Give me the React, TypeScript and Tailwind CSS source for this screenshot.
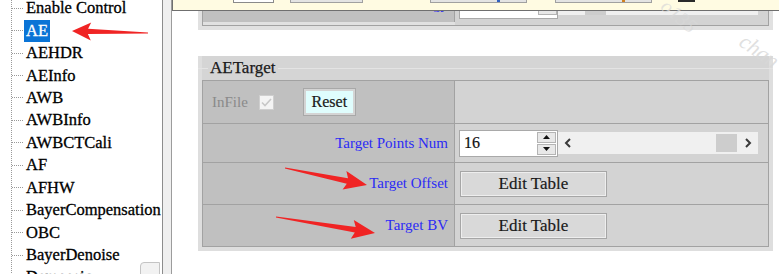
import React from 'react';

const TREE_ITEMS = [
  'Enable Control',
  'AE',
  'AEHDR',
  'AEInfo',
  'AWB',
  'AWBInfo',
  'AWBCTCali',
  'AF',
  'AFHW',
  'BayerCompensation',
  'OBC',
  'BayerDenoise',
  'Demosaic',
];

type Pt = [number, number];

// tapered red annotation arrow, built from tail / tip
const arrowPoints = (tail: Pt, tip: Pt, headLen: number, headHalf: number, tailHalf: number, neckHalf: number) => {
  const dx = tip[0] - tail[0];
  const dy = tip[1] - tail[1];
  const len = Math.hypot(dx, dy);
  const ux = dx / len;
  const uy = dy / len;
  const nx = -uy;
  const ny = ux;
  const base: Pt = [tip[0] - ux * headLen, tip[1] - uy * headLen];
  const pts: Pt[] = [
    [tail[0] + nx * tailHalf, tail[1] + ny * tailHalf],
    [base[0] + nx * neckHalf, base[1] + ny * neckHalf],
    [base[0] + nx * headHalf - ux * 3, base[1] + ny * headHalf - uy * 3],
    tip,
    [base[0] - nx * headHalf - ux * 3, base[1] - ny * headHalf - uy * 3],
    [base[0] - nx * neckHalf, base[1] - ny * neckHalf],
    [tail[0] - nx * tailHalf, tail[1] - ny * tailHalf],
  ];
  return pts.map(p => `${p[0].toFixed(1)},${p[1].toFixed(1)}`).join(' ');
};

const Arrows: React.FC = () => (
  <svg className="absolute inset-0 pointer-events-none" width={779} height={274} viewBox="0 0 779 274">
    <polygon points={arrowPoints([148, 33], [72, 31], 16, 9, 0.6, 2.6)} fill="#f02424" />
    <polygon points={arrowPoints([285, 168], [367, 185], 20, 9.5, 0.6, 2.8)} fill="#f02424" />
    <polygon points={arrowPoints([276, 217], [375, 233], 20, 9.5, 0.6, 2.8)} fill="#f02424" />
  </svg>
);

const Sidebar: React.FC = () => (
  <div className="relative w-[163px] shrink-0 h-full bg-white border-r border-[#8c8c8c] overflow-hidden">
    <div className="ml-[11px] -mt-[3px] border-l border-dotted border-[#9a9a9a]">
      {TREE_ITEMS.map(item => {
        const selected = item === 'AE';
        return (
          <div key={item} className="flex items-center h-[22.45px]">
            <div className="w-[11px] border-t border-dotted border-[#9a9a9a]" />
            <span
              className={
                selected
                  ? 'ml-[1px] px-[2px] leading-[22px] bg-[#0a74d6] text-white text-[16.5px] whitespace-nowrap [-webkit-text-stroke:0.3px_white]'
                  : 'ml-[3px] text-[16.5px] leading-[22px] text-black whitespace-nowrap [-webkit-text-stroke:0.3px_black]'
              }
            >
              {item}
            </span>
          </div>
        );
      })}
    </div>
    {/* scroll grip */}
    <div className="absolute left-[140px] top-[262px] w-[20px] h-[16px] bg-[#f2f2f2] border border-[#c4c4c4] rounded-tl-[4px]" />
  </div>
);

const Splitter: React.FC = () => (
  <div className="w-[9px] shrink-0 h-full bg-[#efefef] border-r border-[#9c9c9c]" />
);

const EditTableButton: React.FC = () => (
  <button className="w-[147px] h-[26px] bg-[#d9d9d9] border border-[#a6a6a6] shadow-[inset_1px_1px_0_#eeeeee,inset_-1px_-1px_0_#eeeeee] text-[17px] leading-none text-[#1a1a1a] flex items-center justify-center [-webkit-text-stroke:0.2px_#1a1a1a]">
    Edit Table
  </button>
);

const Chevron: React.FC<{ dir: 'left' | 'right' }> = ({ dir }) => (
  <svg width="10" height="12" viewBox="0 0 10 12">
    <path
      d={dir === 'left' ? 'M7 2 L3 6 L7 10' : 'M3 2 L7 6 L3 10'}
      fill="none"
      stroke="#3a3a3a"
      strokeWidth="2"
    />
  </svg>
);

const SpinInput: React.FC<{ value: string }> = ({ value }) => (
  <div className="w-[99px] h-[27px] bg-white border border-[#a9a9a9] flex items-stretch">
    <span className="flex-1 pl-[4px] pt-[3px] text-[16px] leading-[18px] text-[#111] [-webkit-text-stroke:0.2px_#111]">{value}</span>
    <div className="w-[19px] my-[1px] mr-[1px] flex flex-col gap-[1px]">
      <div className="flex-1 bg-[#e8e8e8] border border-[#b4b4b4] flex items-center justify-center">
        <svg width="7" height="4" viewBox="0 0 7 4"><path d="M0 4 L3.5 0 L7 4 Z" fill="#111" /></svg>
      </div>
      <div className="flex-1 bg-[#e8e8e8] border border-[#b4b4b4] flex items-center justify-center">
        <svg width="7" height="4" viewBox="0 0 7 4"><path d="M0 0 L3.5 4 L7 0 Z" fill="#111" /></svg>
      </div>
    </div>
  </div>
);

const HScroll: React.FC = () => (
  <div className="w-[200px] h-[22px] bg-[#f0f0f0] flex items-center">
    <div className="w-[20px] flex justify-center"><Chevron dir="left" /></div>
    <div className="flex-1 flex justify-end pr-[1px]">
      <div className="w-[21px] h-[18px] bg-[#cdcdcd]" />
    </div>
    <div className="w-[20px] flex justify-center"><Chevron dir="right" /></div>
  </div>
);

const PreviousPanel: React.FC = () => (
  <div className="h-[30px] shrink-0 bg-[#e1e1e1] px-[4px] pb-[4px]">
    <div className="h-[26px] grid grid-cols-[252px_1fr] border-x border-b border-[#a2a2a2]">
      <div className="h-[25px] bg-[#c0c0c0] border-r border-[#a2a2a2] flex justify-end items-start pr-[6px] -mt-[3px]">
        <span className="text-[15px] leading-[15px] text-[#2b2bf5]">Luma Strategy</span>
      </div>
      <div className="bg-[#d3d3d3] flex items-start pl-[4px]">
        <div className="w-[99px] h-[19px] bg-white border-x border-b border-[#a9a9a9] flex justify-end">
          <div className="w-[19px] h-[15px] bg-[#e8e8e8] border-x border-b border-[#b4b4b4]" />
        </div>
        <div className="w-[200px] h-[15px] bg-[#f0f0f0] flex items-end pl-[27px]">
          <div className="w-[21px] h-[5px] bg-[#cdcdcd]" />
        </div>
      </div>
    </div>
  </div>
);

const TopStrip: React.FC = () => (
  <div className="absolute top-0 left-[172px] right-0 h-[11px] bg-[#fffbe2] border-l border-b border-[#6f6f6f] flex items-start">
    <div className="ml-[60px] w-[41px] h-[3px] bg-white border-x border-b border-[#8a8a8a]" />
    <div className="ml-[16px] w-[73px] h-[3px] bg-[#e3e3e3] border-x border-b border-[#a0a0a0]" />
    <div className="ml-[67px] w-[97px] h-[3px] bg-[#e3e3e3] border-x border-b border-[#a0a0a0] flex justify-end pr-[26px]">
      <div className="w-[3px] h-[2px] bg-[#3060c0]" />
    </div>
    <div className="ml-[28px] w-[97px] h-[3px] bg-[#e3e3e3] border-x border-b border-[#a0a0a0] flex justify-end pr-[26px]">
      <div className="w-[3px] h-[2px] bg-[#d08020]" />
    </div>
    <div className="ml-[26px] w-[17px] h-[2px] bg-[#2a2a2a]" />
  </div>
);

const AETargetPanel: React.FC = () => (
  <div className="mt-[26px] shrink-0 bg-[#d5d5d5] px-[4px] pb-[4px] shadow-[inset_4px_0_0_#dedede,inset_-4px_0_0_#dedede,inset_0_-4px_0_#dedede]">
    {/* legend */}
    <div className="h-[24px] flex items-center -mx-[4px]">
      <div className="w-[10px] h-px bg-[#e4e4e4]" />
      <span className="px-[2px] text-[17px] leading-[20px] text-[#1a1a1a] [-webkit-text-stroke:0.25px_#1a1a1a]">AETarget</span>
      <div className="flex-1 h-px bg-[#e4e4e4]" />
    </div>
    <div className="grid grid-cols-[252px_1fr] border border-[#a2a2a2]">
      {/* row 1 */}
      <div className="h-[43px] bg-[#c0c0c0] border-r border-b border-[#a2a2a2] flex items-center pl-[9px]">
        <span className="text-[15px] text-[#8a8a8a]">InFile</span>
        <span className="ml-[11px] w-[15px] h-[15px] bg-[#f4f4f4] border border-[#cfcfcf] flex items-center justify-center">
          <svg width="11" height="9" viewBox="0 0 11 9">
            <path d="M1 4.5 L4 7.5 L10 1" fill="none" stroke="#c8c8c8" strokeWidth="1.6" />
          </svg>
        </span>
        <button className="ml-[29px] w-[53px] h-[28px] bg-[#dffdfd] border border-[#a8a8a8] shadow-[inset_0_0_0_2px_#d4d4d4] text-[16px] leading-none text-[#1a1a1a] flex items-center justify-center [-webkit-text-stroke:0.2px_#1a1a1a]">
          Reset
        </button>
      </div>
      <div className="h-[43px] bg-[#d3d3d3] border-b border-[#a2a2a2]" />

      {/* row 2 */}
      <div className="h-[39px] bg-[#c0c0c0] border-r border-b border-[#a2a2a2] flex items-center justify-end pr-[6px]">
        <span className="text-[15px] text-[#2b2bf5]">Target Points Num</span>
      </div>
      <div className="h-[39px] bg-[#d3d3d3] border-b border-[#a2a2a2] flex items-center pl-[4px]">
        <SpinInput value="16" />
        <HScroll />
      </div>

      {/* row 3 */}
      <div className="h-[42px] bg-[#c0c0c0] border-r border-b border-[#a2a2a2] flex items-center justify-end pr-[6px]">
        <span className="text-[15px] text-[#2b2bf5]">Target Offset</span>
      </div>
      <div className="h-[42px] bg-[#d3d3d3] border-b border-[#a2a2a2] flex items-center pl-[5px]">
        <EditTableButton />
      </div>

      {/* row 4 */}
      <div className="h-[41px] bg-[#c0c0c0] border-r border-[#a2a2a2] flex items-center justify-end pr-[6px]">
        <span className="text-[15px] text-[#2b2bf5]">Target BV</span>
      </div>
      <div className="h-[41px] bg-[#d3d3d3] flex items-center pl-[5px]">
        <EditTableButton />
      </div>
    </div>
  </div>
);

const App: React.FC = () => (
  <div className="relative w-[779px] h-[274px] overflow-hidden bg-white flex font-['Liberation_Serif',serif]">
    <Sidebar />
    <Splitter />
    <div className="flex-1 h-full flex flex-col pl-[26px] pr-[6px]">
      <PreviousPanel />
      <AETargetPanel />
    </div>

    <TopStrip />

    {/* watermark */}
    <span className="absolute left-[664px] -top-[12px] rotate-[40deg] origin-left text-[20px] italic text-[#d8d8d8]/70 pointer-events-none">o135</span>
    <span className="absolute left-[742px] top-[22px] rotate-[35deg] origin-left text-[22px] italic text-[#d8d8d8]/80 pointer-events-none">chan</span>

    <Arrows />
  </div>
);

export default App;
